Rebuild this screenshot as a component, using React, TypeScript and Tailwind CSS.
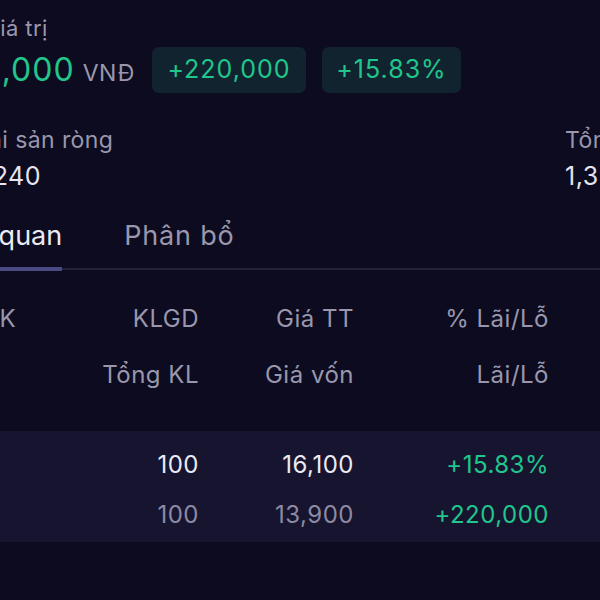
import React from 'react';

const green = 'text-[#20c68b]';
const label = 'text-[#9a97ad]';

const headerTop = ['Mã CK', 'KLGD', 'Giá TT', '% Lãi/Lỗ'];
const headerBottom = ['', 'Tổng KL', 'Giá vốn', 'Lãi/Lỗ'];
const colW = ['w-[164px] justify-start', 'w-[97px] justify-end', 'w-[155px] justify-end', 'w-[195px] justify-end'];

const Row: React.FC<{ cells: React.ReactNode[]; colors?: string[]; className?: string }> = ({
    cells,
    colors = [],
    className = '',
}) => (
    <div className={`flex text-[24px] leading-[34px] tracking-[0.5px] ${className}`}>
        {cells.map((c, i) => (
            <div key={i} className={`${colW[i]} ${colors[i] ?? ''} flex shrink-0 whitespace-nowrap`}>
                {c}
            </div>
        ))}
    </div>
);

export default function App() {
    return (
        <div
            className="w-[600px] h-[600px] overflow-hidden bg-[#0d0b20]"
            style={{ fontFamily: 'Inter, "Noto Sans", sans-serif' }}
        >
            <div className="ml-[-70px] w-[800px] pt-[13px]">
                {/* tổng giá trị */}
                <div className={`ml-[-4px] text-[22px] leading-[30px] tracking-[0.4px] ${label}`}>Tổng giá trị</div>
                <div className="mt-[4px] flex items-center h-[46px]">
                    <div className="w-[205px] shrink-0 flex justify-end items-baseline gap-[8px]">
                        <span className={`text-[32px] tracking-[1px] ${green}`}>1,610,000</span>
                        <span className={`text-[23px] tracking-[0.6px] ${label}`}>VNĐ</span>
                    </div>
                    <div className="ml-[17px] w-[154px] h-[46px] rounded-[7px] bg-[#10232f] flex items-center justify-center text-[25px] tracking-[1px] text-[#20c68b]">
                        +220,000
                    </div>
                    <div className="ml-[16px] w-[139px] h-[46px] rounded-[7px] bg-[#10232f] flex items-center justify-center text-[25px] tracking-[1px] text-[#20c68b]">
                        +15.83%
                    </div>
                </div>

                {/* tài sản ròng / tổng vốn */}
                <div className="mt-[32px] ml-[-7px] flex">
                    <div className="w-[642px] shrink-0">
                        <div className={`ml-[-5px] text-[23px] leading-[30px] tracking-[0.4px] ${label}`}>Tổng tài sản ròng</div>
                        <div className="mt-[6px] ml-[2px] text-[25px] leading-[30px] tracking-[0.5px] text-[#e6e5ef]">1,610,240</div>
                    </div>
                    <div>
                        <div className={`text-[23px] leading-[30px] tracking-[0.4px] ${label}`}>Tổng vốn</div>
                        <div className="mt-[6px] text-[25px] leading-[30px] tracking-[0.5px] text-[#e6e5ef]">1,390,000</div>
                    </div>
                </div>

                {/* tabs */}
                <div className="mt-[27px] border-b-2 border-[#25233c]">
                    <div className="ml-[-3px] flex gap-[62px]">
                        <div className="pb-[13px] border-b-4 border-[#4b4983] mb-[-3px] text-[27px] leading-[36px] text-[#ebeaf3]">
                            Tổng quan
                        </div>
                        <div className={`pb-[13px] text-[27px] leading-[36px] tracking-[0.8px] ${label}`}>Phân bổ</div>
                    </div>
                </div>

                {/* bảng */}
                <div className="ml-[8px]">
                    <Row className={`mt-[32px] ${label}`} cells={headerTop} />
                    <Row className={`mt-[22px] ${label}`} cells={headerBottom} />
                </div>

                <div className="mt-[39px] bg-[#17142f] pt-[17px] pb-[10px]">
                    <div className="ml-[8px]">
                        <Row
                            cells={['VNM', '100', '16,100', '+15.83%']}
                            colors={['text-[#ebeaf3]', 'text-[#ebeaf3]', 'text-[#ebeaf3]', green]}
                        />
                        <Row
                            className="mt-[16px]"
                            cells={['', '100', '13,900', '+220,000']}
                            colors={['', 'text-[#8d8aa3]', 'text-[#8d8aa3]', green]}
                        />
                    </div>
                </div>
            </div>
        </div>
    );
}
